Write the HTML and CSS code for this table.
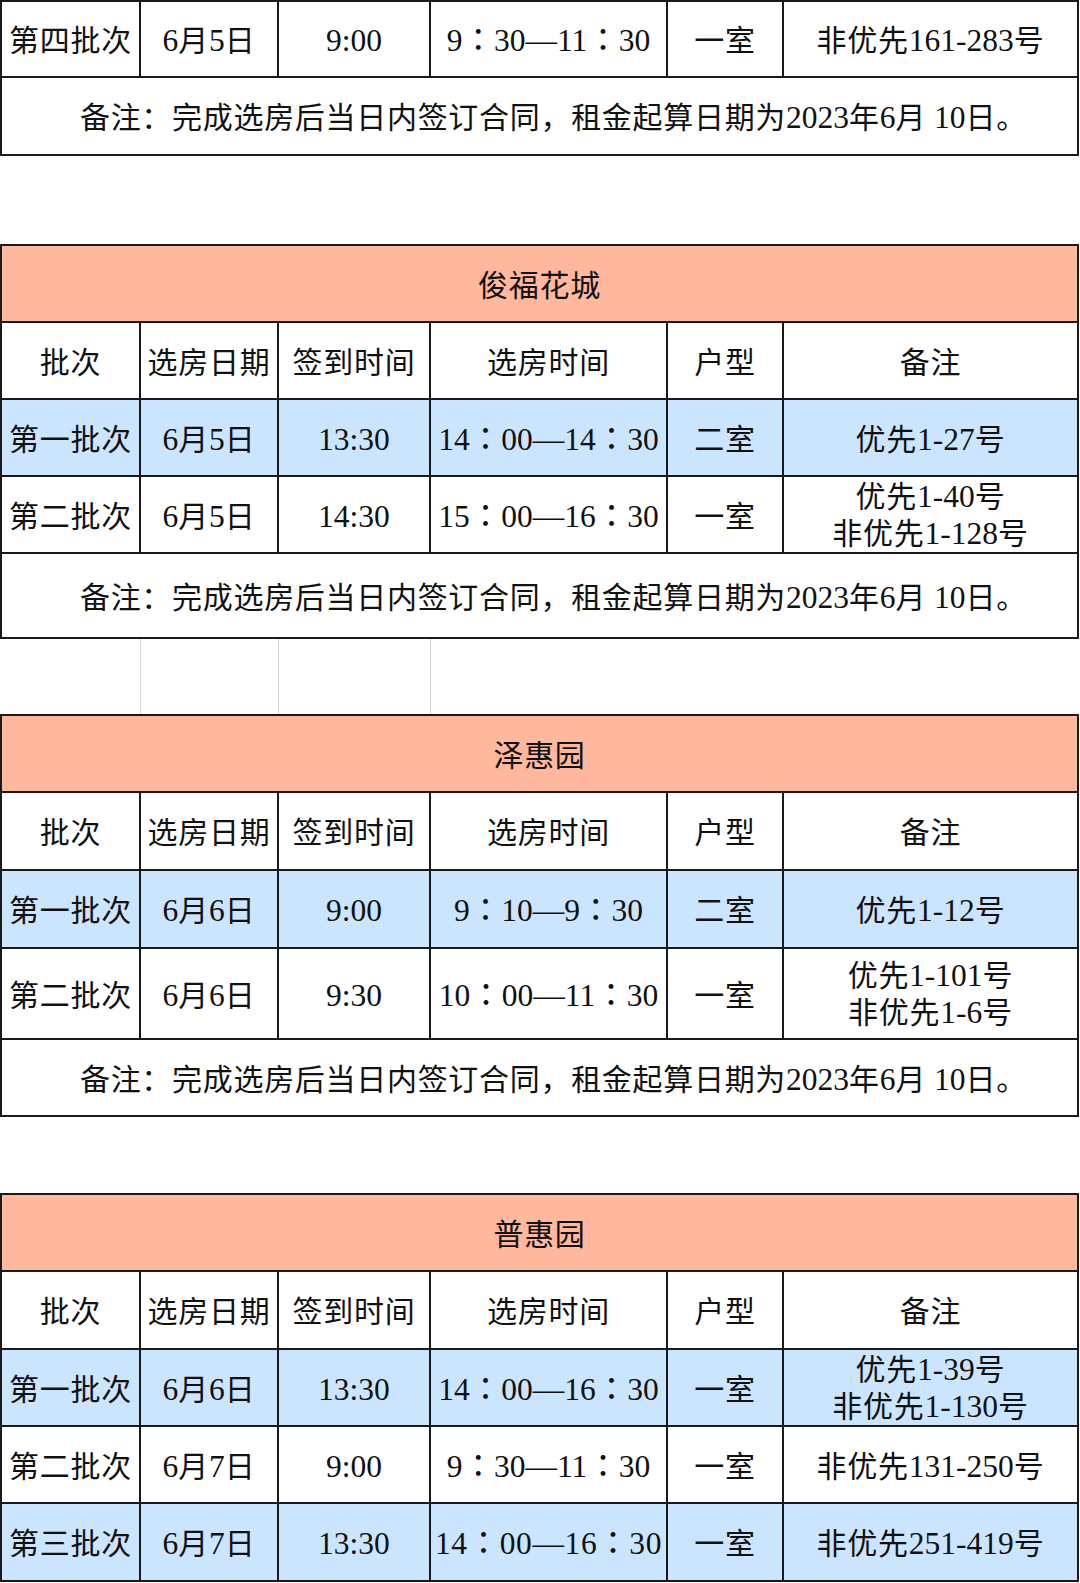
FILE: index.html
```html
<!DOCTYPE html>
<html lang="zh-CN">
<head>
<meta charset="utf-8">
<title>选房安排</title>
<link rel="stylesheet" href="styles.css">
</head>
<body>
<table class="sheet">
  <colgroup>
    <col class="c1"><col class="c2"><col class="c3"><col class="c4"><col class="c5"><col class="c6">
  </colgroup>
  <tbody>
    <tr class="h76">
      <td>第四批次</td><td><span class="n">6</span>月<span class="n">5</span>日</td><td class="n">9:00</td><td class="t">9：30—11：30</td><td>一室</td><td>非优先<span class="n">161-283</span>号</td>
    </tr>
    <tr class="h78">
      <td colspan="6" class="note">备注：完成选房后当日内签订合同，租金起算日期为<span class="n">2023</span>年<span class="n">6</span>月<span class="n"> 10</span>日。</td>
    </tr>
    <tr class="gap h90"><td colspan="6"></td></tr>

    <tr class="h77"><td colspan="6" class="title">俊福花城</td></tr>
    <tr class="h77">
      <td>批次</td><td>选房日期</td><td>签到时间</td><td>选房时间</td><td>户型</td><td>备注</td>
    </tr>
    <tr class="h77 blue">
      <td>第一批次</td><td><span class="n">6</span>月<span class="n">5</span>日</td><td class="n">13:30</td><td class="t">14：00—14：30</td><td>二室</td><td>优先<span class="n">1-27</span>号</td>
    </tr>
    <tr class="h77">
      <td>第二批次</td><td><span class="n">6</span>月<span class="n">5</span>日</td><td class="n">14:30</td><td class="t">15：00—16：30</td><td>一室</td><td class="two">优先<span class="n">1-40</span>号<br>非优先<span class="n">1-128</span>号</td>
    </tr>
    <tr class="h85">
      <td colspan="6" class="note">备注：完成选房后当日内签订合同，租金起算日期为<span class="n">2023</span>年<span class="n">6</span>月<span class="n"> 10</span>日。</td>
    </tr>
    <tr class="gap grid h77"><td></td><td></td><td></td><td colspan="3"></td></tr>

    <tr class="h77"><td colspan="6" class="title">泽惠园</td></tr>
    <tr class="h78">
      <td>批次</td><td>选房日期</td><td>签到时间</td><td>选房时间</td><td>户型</td><td>备注</td>
    </tr>
    <tr class="h78 blue">
      <td>第一批次</td><td><span class="n">6</span>月<span class="n">6</span>日</td><td class="n">9:00</td><td class="t">9：10—9：30</td><td>二室</td><td>优先<span class="n">1-12</span>号</td>
    </tr>
    <tr class="h91">
      <td>第二批次</td><td><span class="n">6</span>月<span class="n">6</span>日</td><td class="n">9:30</td><td class="t">10：00—11：30</td><td>一室</td><td class="two">优先<span class="n">1-101</span>号<br>非优先<span class="n">1-6</span>号</td>
    </tr>
    <tr class="h77">
      <td colspan="6" class="note">备注：完成选房后当日内签订合同，租金起算日期为<span class="n">2023</span>年<span class="n">6</span>月<span class="n"> 10</span>日。</td>
    </tr>
    <tr class="gap h78"><td colspan="6"></td></tr>

    <tr class="h77"><td colspan="6" class="title">普惠园</td></tr>
    <tr class="h78">
      <td>批次</td><td>选房日期</td><td>签到时间</td><td>选房时间</td><td>户型</td><td>备注</td>
    </tr>
    <tr class="h77 blue">
      <td>第一批次</td><td><span class="n">6</span>月<span class="n">6</span>日</td><td class="n">13:30</td><td class="t">14：00—16：30</td><td>一室</td><td class="two">优先<span class="n">1-39</span>号<br>非优先<span class="n">1-130</span>号</td>
    </tr>
    <tr class="h77">
      <td>第二批次</td><td><span class="n">6</span>月<span class="n">7</span>日</td><td class="n">9:00</td><td class="t">9：30—11：30</td><td>一室</td><td>非优先<span class="n">131-250</span>号</td>
    </tr>
    <tr class="h78 blue">
      <td>第三批次</td><td><span class="n">6</span>月<span class="n">7</span>日</td><td class="n">13:30</td><td class="t wide">14：00—16：30</td><td>一室</td><td>非优先<span class="n">251-419</span>号</td>
    </tr>
  </tbody>
</table>
</body>
</html>
```

FILE: styles.css
```css
html, body {
  margin: 0;
  padding: 0;
  background: #ffffff;
}

.sheet {
  border-collapse: collapse;
  table-layout: fixed;
  width: 1079px;
  font-family: "Liberation Serif", "Noto Sans CJK SC", serif;
  font-size: 30px;
  line-height: 38px;
  letter-spacing: 0.7px;
  color: #111111;
}

.c1 { width: 139px; }
.c2 { width: 138px; }
.c3 { width: 152px; }
.c4 { width: 237px; }
.c5 { width: 116px; }
.c6 { width: 295px; }

.sheet td {
  border: 2px solid #1a1a1a;
  padding: 4px 0 0 0;
  text-align: center;
  vertical-align: middle;
  white-space: nowrap;
  overflow: hidden;
}

.sheet td.two {
  padding-top: 1px;
  line-height: 37px;
}

.sheet td.note {
  padding-left: 28px;
}

.n {
  font-size: 31.5px;
  letter-spacing: 0;
}

.sheet td.t {
  font-family: "Liberation Serif", "Noto Sans CJK JP", serif;
  font-size: 31.5px;
  letter-spacing: 0;
}

.sheet td.wide {
  letter-spacing: 0.6px;
}

.h76 { height: 76px; }
.h77 { height: 77px; }
.h78 { height: 78px; }
.h85 { height: 85px; }
.h90 { height: 90px; }
.h91 { height: 91px; }

.title {
  background: #ffb79d;
}

.blue td {
  background: #cce5ff;
}

.sheet .gap td {
  border-left: none;
  border-right: none;
  background: #ffffff;
}

.sheet .grid td {
  border-right: 1px solid #d4d4d4;
}

.sheet .grid td:last-child {
  border-right: none;
}
```
